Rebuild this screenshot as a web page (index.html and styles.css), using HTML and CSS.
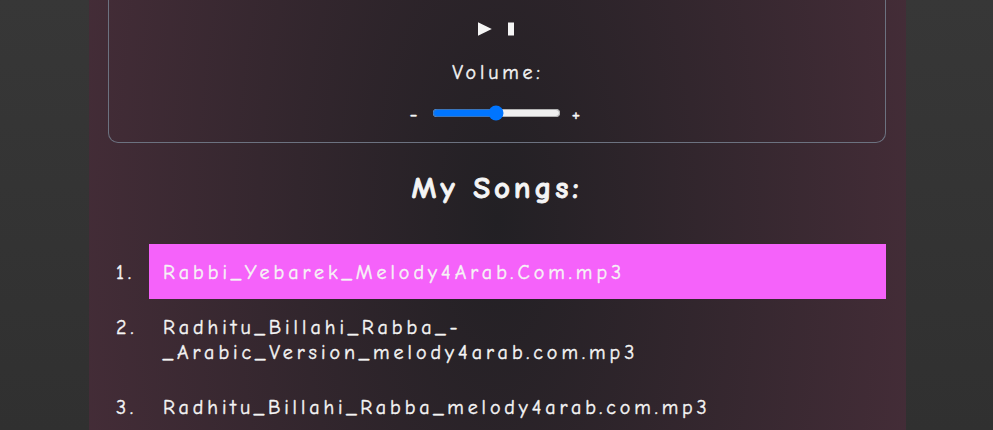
FILE: index.html
```html
<!DOCTYPE html>
<html lang="en">
<head>
<meta charset="utf-8">
<title>Music player</title>
<link rel="stylesheet" href="styles.css">
</head>
<body>
<main class="panel">
  <section class="player">
    <div class="controls">
      <svg class="play" viewBox="0 0 14 14"><path d="M0 0.3 L13.8 7 L0 13.7Z"/></svg>
      <svg class="pause" viewBox="0 0 6 14"><path d="M0 0.5H6V13.5H0Z"/></svg>
    </div>
    <label class="volume-label" for="volume">Volume:</label>
    <div class="volume">
      <span class="sign">-</span>
      <input class="slider" id="volume" type="range" min="0" max="100" value="50">
      <span class="sign plus">+</span>
    </div>
  </section>
  <h2 class="title">My Songs:</h2>
  <div class="songs">
    <div class="row"><span class="num">1.</span><span class="song active"><span class="line line-a">Rabbi_Yebarek_Melody4Arab.Com.mp3</span></span></div>
    <div class="row"><span class="num">2.</span><span class="song"><span class="line line-b">Radhitu_Billahi_Rabba_-</span><span class="line line-c">_Arabic_Version_melody4arab.com.mp3</span></span></div>
    <div class="row"><span class="num">3.</span><span class="song"><span class="line line-d">Radhitu_Billahi_Rabba_melody4arab.com.mp3</span></span></div>
  </div>
</main>
</body>
</html>
```
FILE: styles.css
```css
* { box-sizing: border-box; }
body {
  margin: 0;
  height: 430px;
  overflow: hidden;
  background: linear-gradient(#373737, #303030);
  color: #f5f5f5;
  font: 400 20px/25px "Comic Sans MS", "Comic Neue", "Noto Sans", sans-serif;
  letter-spacing: 4px;
  -webkit-text-stroke: 0.4px currentColor;
}
.panel {
  width: 817px;
  height: 430px;
  margin-left: 89px;
  padding: 0 20px 0 19px;
  overflow: hidden;
  background: radial-gradient(ellipse 440px 950px at 50% 220px, #222024, #452d38);
}
.player {
  height: 143.4px;
  width: 778px;
  border: 1px solid #6c7280;
  border-top: 0;
  border-radius: 0 0 10px 10px;
  display: flex;
  flex-direction: column;
  align-items: center;
}
.controls {
  display: flex;
  gap: 16px;
  margin: 22px 2px 0 0;
  height: 14px;
}
.play { width: 14px; height: 14px; fill: #f5f5f5; }
.pause { width: 6px; height: 14px; fill: #f5f5f5; }
.volume-label { margin-top: 24px; padding-left: 2px; letter-spacing: 3.8px; }
.volume {
  display: flex;
  align-items: center;
  height: 25px;
  margin: 15px 4px 0 0;
}
.slider { width: 129px; height: 16px; margin: 0 11px 0 13px; }
.sign { width: 9px; letter-spacing: 0; padding-top: 3px; }
.title {
  margin: 24.6px 0 0;
  height: 40px;
  font-size: 31px;
  font-weight: 700;
  line-height: 40px;
  letter-spacing: 3.8px;
  text-align: center;
  -webkit-text-stroke-width: 0.8px;
}
.songs { margin-top: 36px; }
.row { display: flex; }
.num { width: 40.5px; padding: 16px 0 0 8px; }
.song { flex: 1; padding: 16px 14.5px 14px; }
.active { background: #f562fa; }
.line { display: block; white-space: nowrap; }
.line-d { letter-spacing: 3.9px; }
```
